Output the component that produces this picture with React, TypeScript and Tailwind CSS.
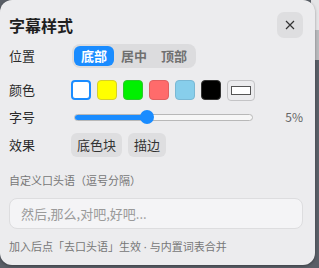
import React from "react";

const font = { fontFamily: '"Noto Sans CJK SC", "Noto Sans", sans-serif' };

export default function App() {
  return (
    <div className="relative w-[319px] h-[268px] bg-[#5a5f67] overflow-hidden" style={font}>
      <div className="absolute right-0 top-0 w-[8px] h-[30px] bg-[#e4e4e6]" />
      <div className="absolute right-0 top-[30px] w-[8px] h-[30px] bg-[#b9babd]" />
      <div className="relative w-[315px] h-[265px] rounded-[12px] bg-[#ececee] shadow-[0_1px_3px_rgba(0,0,0,0.35)] flex flex-col pl-[9px] pr-[12px]">
        <div className="mt-[12px] h-[26px] flex items-center justify-between">
          <div className="text-[16px] font-bold text-[#1f1f1f] leading-[22px]">字幕样式</div>
          <button className="w-[26px] h-[26px] rounded-[7px] bg-[#dedee0] flex items-center justify-center">
            <svg width="10" height="10" viewBox="0 0 10 10">
              <path d="M1 1L9 9M9 1L1 9" stroke="#333" strokeWidth="1.2" />
            </svg>
          </button>
        </div>

        <div className="mt-[7px] h-[22px] flex items-center">
          <div className="w-[63px] text-[13px] text-[#2a2a2a]">位置</div>
          <div className="flex p-[2px] rounded-[8px] bg-[#dcdcde]">
            <div className="w-[40px] h-[20px] rounded-[6px] bg-[#1a8cff] text-white text-[13px] font-semibold flex items-center justify-center">底部</div>
            <div className="w-[40px] h-[20px] rounded-[6px] text-[#707070] text-[13px] font-semibold flex items-center justify-center">居中</div>
            <div className="w-[40px] h-[20px] rounded-[6px] text-[#707070] text-[13px] font-semibold flex items-center justify-center">顶部</div>
          </div>
        </div>

        <div className="mt-[13px] h-[20px] flex items-center">
          <div className="w-[62px] text-[13px] text-[#2a2a2a]">颜色</div>
          <div className="flex items-center gap-[6px]">
            <div className="w-[20px] h-[20px] rounded-[4px] bg-white border-2 border-[#1a8cff]" />
            <div className="w-[20px] h-[20px] rounded-[4px] bg-[#ffff00] border border-[#d6cf2a]" />
            <div className="w-[20px] h-[20px] rounded-[4px] bg-[#00f000] border border-[#2cc82c]" />
            <div className="w-[20px] h-[20px] rounded-[4px] bg-[#ff6b6b] border border-[#e06060]" />
            <div className="w-[20px] h-[20px] rounded-[4px] bg-[#87ceeb] border border-[#7ab8d4]" />
            <div className="w-[20px] h-[20px] rounded-[4px] bg-black border border-[#333]" />
            <div className="w-[28px] h-[21px] rounded-[4px] border border-[#c4c4c6] flex items-center justify-center">
              <div className="w-[20px] h-[9px] bg-white border border-[#555]" />
            </div>
          </div>
        </div>

        <div className="mt-[10px] h-[14px] flex items-center">
          <div className="w-[65px] text-[13px] text-[#2a2a2a]">字号</div>
          <div className="relative w-[179px] h-[14px] flex items-center">
            <div className="w-full h-[7px] rounded-full bg-[#f7f7f7] border border-[#b8b8b8] overflow-hidden">
              <div className="h-full w-[73px] bg-[#1a8cff]" />
            </div>
            <div className="absolute left-[66px] top-0 w-[14px] h-[14px] rounded-full bg-[#1a8cff]" />
          </div>
          <div className="flex-1 text-right text-[12px] text-[#666]">5%</div>
        </div>

        <div className="mt-[9px] h-[24px] flex items-center">
          <div className="w-[62px] text-[13px] text-[#2a2a2a]">效果</div>
          <div className="flex gap-[6px]">
            <div className="h-[24px] px-[6px] rounded-[6px] bg-[#dedee0] text-[13px] text-[#333] flex items-center">底色块</div>
            <div className="h-[24px] px-[6px] rounded-[6px] bg-[#dedee0] text-[13px] text-[#333] flex items-center">描边</div>
          </div>
        </div>

        <div className="mt-[15px] h-[16px] text-[11px] leading-[16px] text-[#777]">自定义口头语（逗号分隔）</div>

        <div className="mt-[10px] w-[294px] h-[31px] rounded-[8px] bg-[#f4f4f6] border border-[#dddddf] flex items-center pl-[11px] text-[13px] text-[#9a9a9a]">
          然后,那么,对吧,好吧...
        </div>

        <div className="mt-[9px] h-[16px] text-[11px] leading-[16px] text-[#777]">
          加入后点「去口头语」生效<span style={{ fontFamily: '"Noto Sans", sans-serif' }}> · </span>与内置词表合并
        </div>
      </div>
    </div>
  );
}
